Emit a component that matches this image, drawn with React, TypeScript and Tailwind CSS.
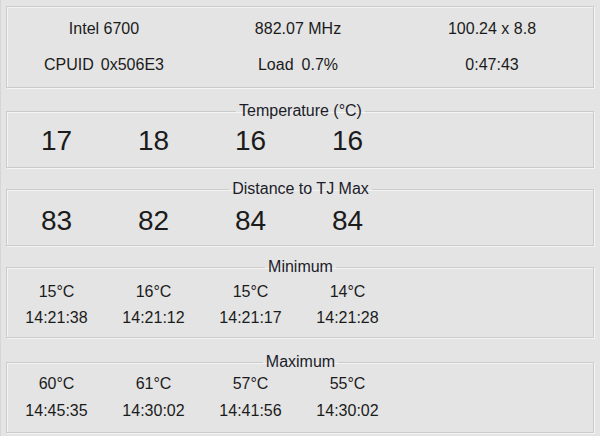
import React from "react";

const font = { fontFamily: '"Liberation Sans", Arial, sans-serif' };

function Group({
  title,
  className,
  children,
}: {
  title: string;
  className: string;
  children: React.ReactNode;
}) {
  return (
    <fieldset
      className={`ml-[5px] w-[588px] border border-[#cbcbcb] shadow-[1px_1px_0_#f4f4f4,inset_1px_1px_0_#f4f4f4] ${className}`}
    >
      <legend className="mx-auto px-[3px] text-[16px] leading-[16px] text-[#1c1c2a]">{title}</legend>
      {children}
    </fieldset>
  );
}

const temps = ["17", "18", "16", "16"];
const dist = ["83", "82", "84", "84"];
const mins = [
  ["15°C", "14:21:38"],
  ["16°C", "14:21:12"],
  ["15°C", "14:21:17"],
  ["14°C", "14:21:28"],
];
const maxs = [
  ["60°C", "14:45:35"],
  ["61°C", "14:30:02"],
  ["57°C", "14:41:56"],
  ["55°C", "14:30:02"],
];

export default function App() {
  return (
    <div
      className="w-[600px] h-[436px] overflow-hidden bg-[#e4e4e4] text-[#1b1b1b] border-l border-[#d6d6d6]"
      style={font}
    >
      <div className="pt-[6px]">
        <div className="ml-[5px] w-[588px] h-[82px] border border-[#cbcbcb] shadow-[1px_1px_0_#f4f4f4,inset_1px_1px_0_#f4f4f4] pt-[12px] pr-[4px] grid grid-cols-3 content-start gap-y-[16px] text-[16px] leading-[20px]">
          <div className="text-center">Intel 6700</div>
          <div className="text-center">882.07 MHz</div>
          <div className="text-center">100.24 x 8.8</div>
          <div className="flex justify-center gap-[7px]">
            <span>CPUID</span>
            <span>0x506E3</span>
          </div>
          <div className="flex justify-center gap-[8px]">
            <span>Load</span>
            <span>0.7%</span>
          </div>
          <div className="text-center">0:47:43</div>
        </div>

        <Group title="Temperature (°C)" className="mt-[15px] pl-[1px] pt-[6px] pb-[10px]">
          <div className="flex text-[28px] leading-[32px]">
            {temps.map((t, i) => (
              <div key={i} className="w-[97px] text-center">
                {t}
              </div>
            ))}
          </div>
        </Group>

        <Group title="Distance to TJ Max" className="mt-[13px] pl-[1px] pt-[8px] pb-[8px]">
          <div className="flex text-[28px] leading-[32px]">
            {dist.map((t, i) => (
              <div key={i} className="w-[97px] text-center">
                {t}
              </div>
            ))}
          </div>
        </Group>

        <Group title="Minimum" className="mt-[13px] pl-[1px] pt-[8px] pb-[10px]">
          <div className="flex text-[16px] leading-[18px]">
            {mins.map(([a, b], i) => (
              <div key={i} className="w-[97px] flex flex-col items-center gap-[8px]">
                <span>{a}</span>
                <span>{b}</span>
              </div>
            ))}
          </div>
        </Group>

        <Group title="Maximum" className="mt-[16px] pl-[1px] pt-[5px] pb-[12px]">
          <div className="flex text-[16px] leading-[18px]">
            {maxs.map(([a, b], i) => (
              <div key={i} className="w-[97px] flex flex-col items-center gap-[9px]">
                <span>{a}</span>
                <span>{b}</span>
              </div>
            ))}
          </div>
        </Group>
      </div>
    </div>
  );
}
